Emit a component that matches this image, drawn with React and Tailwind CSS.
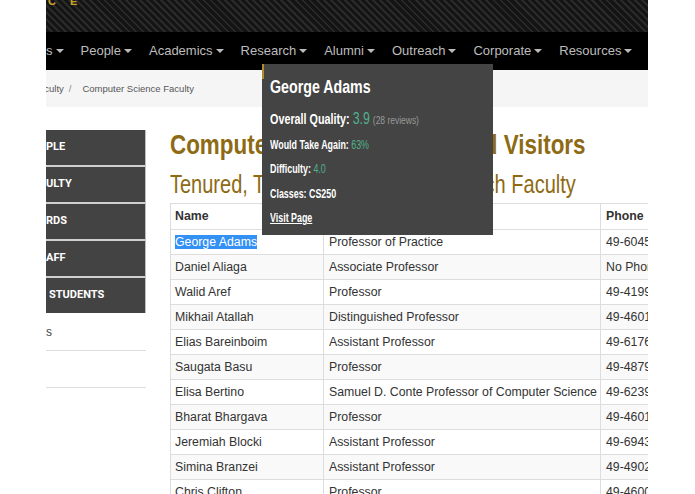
import React from 'react';

const navItems = ['s', 'People', 'Academics', 'Research', 'Alumni', 'Outreach', 'Corporate', 'Resources'];

const sideItems = [
  { label: 'PLE', pad: 'pl-0' },
  { label: 'ULTY', pad: 'pl-0' },
  { label: 'RDS', pad: 'pl-0' },
  { label: 'AFF', pad: 'pl-0' },
  { label: 'STUDENTS', pad: 'pl-[3px]' },
];

const faculty = [
  ['George Adams', 'Professor of Practice', '49-60457'],
  ['Daniel Aliaga', 'Associate Professor', 'No Phone'],
  ['Walid Aref', 'Professor', '49-41997'],
  ['Mikhail Atallah', 'Distinguished Professor', '49-46013'],
  ['Elias Bareinboim', 'Assistant Professor', '49-61763'],
  ['Saugata Basu', 'Professor', '49-48794'],
  ['Elisa Bertino', 'Samuel D. Conte Professor of Computer Science', '49-62391'],
  ['Bharat Bhargava', 'Professor', '49-46013'],
  ['Jeremiah Blocki', 'Assistant Professor', '49-69431'],
  ['Simina Branzei', 'Assistant Professor', '49-49022'],
  ['Chris Clifton', 'Professor', '49-46005'],
];

const Caret = () => (
  <span className="inline-block w-0 h-0 ml-[3px] align-middle border-x-[4px] border-t-[4px] border-x-transparent border-t-[#bbbbbb]" />
);

// condensed look: no narrow face installed, so squeeze horizontally
const Tooltip = () => (
  <div className="absolute left-[262px] top-[64px] w-[231px] h-[171px] bg-[#444444] text-white px-[8px] pt-[13px] whitespace-nowrap">
    <div className="absolute left-0 top-0 w-[2px] h-[15px] bg-[#b08d2a]" />
    <div className="origin-left scale-x-[0.79] text-[18px] leading-[21px] font-bold">George Adams</div>
    <div className="mt-[12px] origin-left scale-x-[0.77] text-[14px] leading-[18px] font-bold">
      Overall Quality: <span className="text-[16px] font-normal text-[#4fb28b]">3.9</span>{' '}
      <span className="text-[11px] font-normal text-[#9a9a9a]">(28 reviews)</span>
    </div>
    <div className="mt-[8px] origin-left scale-x-[0.74] text-[12px] leading-[16px] font-bold">
      Would Take Again: <span className="font-normal text-[#4fb28b]">63%</span>
    </div>
    <div className="mt-[8px] origin-left scale-x-[0.74] text-[12px] leading-[16px] font-bold">
      Difficulty: <span className="font-normal text-[#4fb28b]">4.0</span>
    </div>
    <div className="mt-[9px] origin-left scale-x-[0.74] text-[12px] leading-[16px] font-bold">Classes: CS250</div>
    <div className="mt-[8px] origin-left scale-x-[0.74] text-[12px] leading-[16px] font-bold underline">Visit Page</div>
  </div>
);

export default function App() {
  return (
    <div className="relative w-[695px] h-[494px] bg-white overflow-hidden font-['Liberation_Sans',Arial,sans-serif]">
      <div className="ml-[46px] w-[602px] h-[494px] overflow-hidden">
        {/* header stripes */}
        <div className="h-[32px] pt-px bg-[repeating-linear-gradient(45deg,#141414_0px,#141414_3px,#2a2a2a_3px,#2a2a2a_5px)]">
          <div className="flex gap-[14px] pl-[2px] -translate-y-[8px] text-[11px] font-bold text-[#c9a227]">
            <span>C</span>
            <span>E</span>
          </div>
        </div>

        {/* nav */}
        <nav className="h-[38px] bg-black flex items-center gap-[17px] text-[13px] text-[#bdbdbd] whitespace-nowrap">
          {navItems.map((item) => (
            <span key={item} className="inline-flex items-center">
              {item}
              <Caret />
            </span>
          ))}
        </nav>

        {/* breadcrumb */}
        <div className="h-[37px] bg-[#f5f5f5] flex items-center text-[9.5px] text-[#555555] pt-[1px] whitespace-nowrap">
          <span className="-ml-[7px]">aculty</span>
          <span className="ml-[5px] mr-[11px] text-[#888888]">/</span>
          <span>Computer Science Faculty</span>
        </div>

        <div className="flex gap-[24px] pt-[23px]">
          {/* sidebar */}
          <aside className="w-[100px] shrink-0">
            <div className="flex flex-col gap-[2px] bg-[#cfcfcf] border-r border-[#bdbdbd]">
              {sideItems.map((s) => (
                <div
                  key={s.label}
                  className={`h-[35px] bg-[#434343] flex items-center text-[11px] font-bold text-white font-['Roboto',sans-serif] ${s.pad}`}
                >
                  {s.label}
                </div>
              ))}
            </div>
            <div className="h-[38px] border-b border-[#dddddd] flex items-center text-[12px] text-[#444444] pt-[1px]">s</div>
            <div className="h-[37px] border-b border-[#dddddd]" />
          </aside>

          {/* main */}
          <main className="flex-1 min-w-0 whitespace-nowrap">
            <h1 className="text-[27px] leading-[30px] font-bold text-[#8d6a13]">
              <span className="inline-block origin-left scale-x-[0.83]">Computer Science Faculty and Visitors</span>
            </h1>
            <h2 className="mt-[10px] text-[25px] leading-[28px] text-[#8d6a13]">
              <span className="inline-block origin-left scale-x-[0.8]">Tenured, Tenure-Track, and Research Faculty</span>
            </h2>
            <table className="mt-[5px] w-[540px] table-fixed border-collapse text-[12.3px] text-[#333333]">
              <colgroup>
                <col className="w-[153px]" />
                <col className="w-[277px]" />
                <col />
              </colgroup>
              <thead>
                <tr className="h-[26px] border-t border-[#dddddd]">
                  <th className="text-left font-bold px-[4px] border-l border-[#dddddd]">Name</th>
                  <th className="text-left font-bold px-[5px] border-l border-[#dddddd]"></th>
                  <th className="text-left font-bold px-[5px] border-l border-[#dddddd]">Phone</th>
                </tr>
              </thead>
              <tbody>
                {faculty.map(([name, title, phone], i) => (
                  <tr key={name} className={`h-[25px] border-t border-[#dddddd] ${i % 2 === 1 ? 'bg-[#f9f9f9]' : 'bg-white'}`}>
                    <td className="px-[4px] border-l border-[#dddddd] overflow-hidden">
                      {i === 0 ? <span className="bg-[#3390f5] text-white">{name}</span> : name}
                    </td>
                    <td className="px-[5px] border-l border-[#dddddd] overflow-hidden">{title}</td>
                    <td className="px-[5px] border-l border-[#dddddd] overflow-hidden">{phone}</td>
                  </tr>
                ))}
              </tbody>
            </table>
          </main>
        </div>
      </div>

      <Tooltip />
    </div>
  );
}
